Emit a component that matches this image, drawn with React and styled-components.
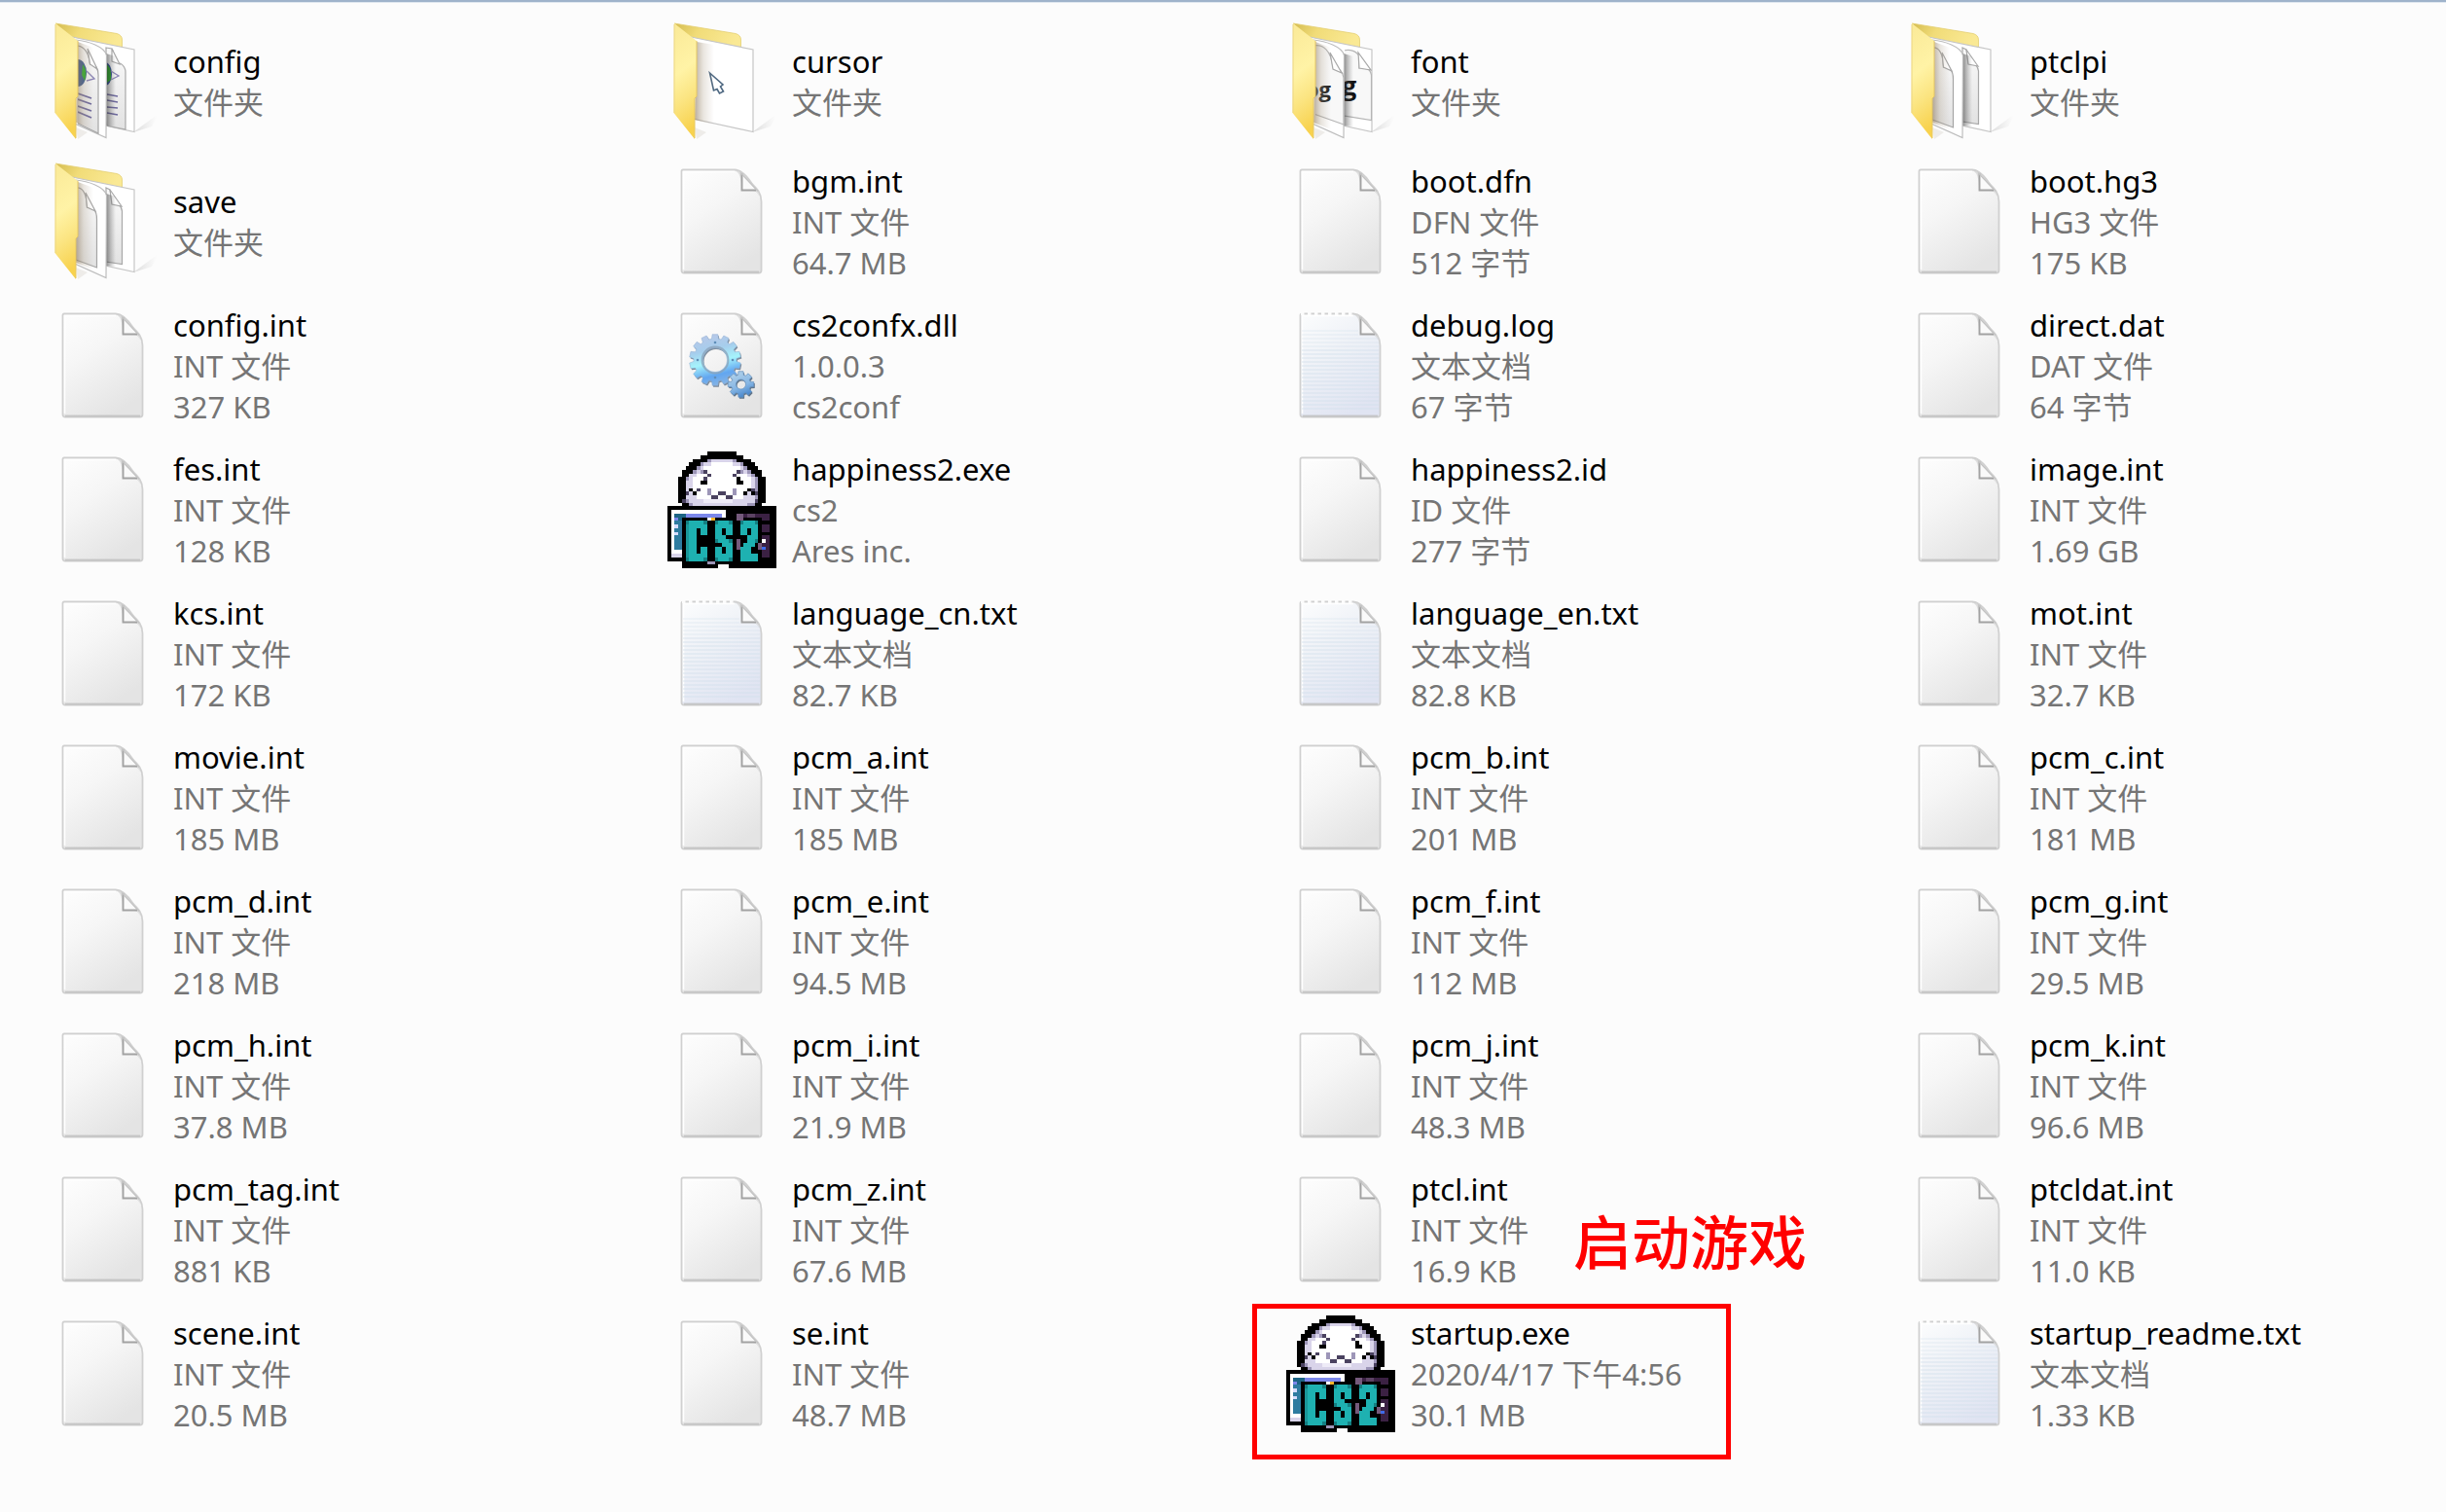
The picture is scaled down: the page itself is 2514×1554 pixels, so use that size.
import React from "react";
import styled, { createGlobalStyle } from "styled-components";

const Global = createGlobalStyle`
  * { box-sizing: border-box; }
  body {
    margin: 0;
    background: #fcfcfc;
    font-family: "Noto Sans", "Noto Sans CJK SC", sans-serif;
  }
`;

const Pane = styled.main`
  border-top: 2px solid #9fb3cb;
  box-shadow: inset 0 1px 0 #dfe7f0;
  padding: 12px 26px 54px 40px;
  min-height: 100vh;
`;

const FileGrid = styled.ul`
  list-style: none;
  margin: 0;
  padding: 0;
  display: grid;
  grid-template-columns: repeat(4, minmax(0, 1fr));
  column-gap: 96px;
`;

const Item = styled.li`
  position: relative;
  display: flex;
  align-items: center;
  gap: 10px;
  padding: 11px 0;
`;

const IconBox = styled.svg`
  flex: none;
  width: 128px;
  height: 118px;
  overflow: visible;
`;

const Lines = styled.div`
  display: flex;
  flex-direction: column;
  white-space: nowrap;
  font-size: 31px;
  line-height: 42px;
`;

const Name = styled.span`
  color: #000;
`;

const Detail = styled.span`
  color: #757575;
`;

const Frame = styled.div`
  position: absolute;
  left: -25px;
  top: 2px;
  width: 492px;
  height: 160px;
  border: 5px solid #f00;
  pointer-events: none;
`;

const Note = styled.strong`
  position: absolute;
  left: 305px;
  top: -94px;
  color: #f00;
  font-family: "Noto Sans CJK SC", sans-serif;
  font-size: 60px;
  font-weight: 500;
  line-height: 60px;
  white-space: nowrap;
`;

const SharedDefs = styled.svg`
  position: absolute;
  width: 0;
  height: 0;
`;

function Defs() {
  return (
    <SharedDefs aria-hidden="true">
      <defs>
        <linearGradient id="paper" x1="0.1" y1="0" x2="0.6" y2="1">
          <stop offset="0" stopColor="#fdfdfd" />
          <stop offset="0.4" stopColor="#f6f6f6" />
          <stop offset="1" stopColor="#e4e4e4" />
        </linearGradient>
        <linearGradient id="notepad" x1="0.1" y1="0" x2="0.6" y2="1">
          <stop offset="0" stopColor="#fbfcfd" />
          <stop offset="0.4" stopColor="#eff2f7" />
          <stop offset="1" stopColor="#e0e4f2" />
        </linearGradient>
        <linearGradient id="flap" x1="0" y1="0" x2="0.15" y2="1">
          <stop offset="0" stopColor="#fae997" />
          <stop offset="0.45" stopColor="#fff3a6" />
          <stop offset="0.72" stopColor="#fbe480" />
          <stop offset="1" stopColor="#f8d24e" />
        </linearGradient>
        <linearGradient id="folderBack" x1="0" y1="0" x2="1" y2="0.3">
          <stop offset="0" stopColor="#d3bb50" />
          <stop offset="0.4" stopColor="#f1dc78" />
          <stop offset="1" stopColor="#fae994" />
        </linearGradient>
        <linearGradient id="cast" x1="0" y1="0" x2="1" y2="0">
          <stop offset="0" stopColor="#8a7458" stopOpacity="0.6" />
          <stop offset="0.45" stopColor="#a8987f" stopOpacity="0.25" />
          <stop offset="1" stopColor="#b0a090" stopOpacity="0" />
        </linearGradient>
        <linearGradient id="pageCast" x1="0" y1="0" x2="1" y2="0">
          <stop offset="0" stopColor="#222" stopOpacity="0.6" />
          <stop offset="1" stopColor="#666" stopOpacity="0" />
        </linearGradient>
        <linearGradient id="innerDoc" x1="0" y1="0" x2="0" y2="1">
          <stop offset="0" stopColor="#fafafa" />
          <stop offset="1" stopColor="#e2e2e2" />
        </linearGradient>
        <linearGradient id="floor" x1="0" y1="0" x2="1" y2="0">
          <stop offset="0" stopColor="#777" stopOpacity="0.26" />
          <stop offset="0.9" stopColor="#999" stopOpacity="0" />
        </linearGradient>
        <linearGradient id="gearBlue" x1="0.3" y1="0" x2="0.55" y2="1">
          <stop offset="0" stopColor="#b9c8e8" />
          <stop offset="0.3" stopColor="#a6cdec" />
          <stop offset="0.55" stopColor="#a5f3fc" />
          <stop offset="0.8" stopColor="#62a6f0" />
          <stop offset="1" stopColor="#86b4e4" />
        </linearGradient>
        <linearGradient id="gearSmall" x1="0.2" y1="0" x2="0.6" y2="1">
          <stop offset="0" stopColor="#b5d3ea" />
          <stop offset="0.6" stopColor="#86b6e4" />
          <stop offset="1" stopColor="#4585cc" />
        </linearGradient>
        <clipPath id="backPage"><path d="M70 10H98V112H70Z" /></clipPath>
        <clipPath id="frontPage"><path d="M40 10H70V120H40Z" /></clipPath>
      </defs>
    </SharedDefs>
  );
}

const SHEET = "M26 5.5H79C87 5.5 93 14 97 20C101 24 106.5 29 106.5 38V109Q106.5 111.5 104 111.5H27Q24.5 111.5 24.5 109V7Q24.5 5.5 26 5.5Z";

function Sheet({ fill = "url(#paper)", children }) {
  return (
    <>
      <path d={SHEET} fill={fill} stroke="#d0d0d0" strokeWidth="1.8" />
      <path d="M27 110.5H104" stroke="#bdbdbd" strokeWidth="1.8" opacity="0.7" />
      <path d="M26.5 108V7.5H79" fill="none" stroke="#fff" strokeWidth="1.5" />
      {children}
      <path d="M79 6C84 8 86 13 86 27H97C102 27 105 32 106 37C104 28 99 23 95 18C90 12 86 7 79 6Z" fill="#d6d6d6" opacity="0.8" />
      <path d="M86.5 9.5V26.5H101Z" fill="#fafafa" />
      <path d="M86.5 9.5V26.5H101" fill="none" stroke="#a2a2a2" strokeWidth="1.9" />
      <path d="M85 8.5L103 27.5" stroke="#c4c4c4" strokeWidth="1.3" />
    </>
  );
}

function BlankIcon() {
  return <Sheet />;
}

function TextIcon() {
  const rules = Array.from({ length: 21 }, (_, i) => 23 + i * 4);
  return (
    <Sheet fill="url(#notepad)">
      {rules.map((y) => (
        <path
          key={y}
          d={`M26 ${y}H${y < 28 ? 84 : 105.5}`}
          stroke="#d2e0ec"
          strokeWidth="1.2"
          opacity={y < 40 ? 0.45 : 0.75}
        />
      ))}
      <path d="M25 5.5H80" stroke="#fcfcfc" strokeWidth="3" strokeDasharray="3.5 3.5" />
      <path d="M89 17H94M89 22H97" stroke="#b5b5b5" strokeWidth="1.5" />
    </Sheet>
  );
}

function gearPath(cx, cy, outer, inner, hole, teeth) {
  const pts = [];
  const step = (Math.PI * 2) / teeth;
  for (let i = 0; i < teeth; i += 1) {
    const a = i * step - Math.PI / 2;
    [[-0.36, inner], [-0.24, outer], [0.24, outer], [0.36, inner]].forEach(([k, r]) => {
      pts.push(`${(cx + Math.cos(a + k * step) * r).toFixed(2)} ${(cy + Math.sin(a + k * step) * r).toFixed(2)}`);
    });
  }
  return `M${pts.join("L")}ZM${cx + hole} ${cy}A${hole} ${hole} 0 1 0 ${cx - hole} ${cy}A${hole} ${hole} 0 1 0 ${cx + hole} ${cy}Z`;
}

function DllIcon() {
  const big = gearPath(59, 53, 26.5, 22, 12.5, 14);
  const small = gearPath(85.5, 78, 13.5, 10, 5, 8);
  return (
    <Sheet>
      <path d={big} transform="translate(1 1.5)" fill="#56697f" fillRule="evenodd" opacity="0.75" />
      <path d={big} fill="url(#gearBlue)" stroke="#8fadd0" strokeWidth="0.5" fillRule="evenodd" />
      <circle cx="59" cy="53" r="13.5" fill="none" stroke="#8ba3ba" strokeWidth="1.8" opacity="0.8" />
      {[[59, 35], [59, 71], [41, 53], [77, 53]].map(([x, y]) => (
        <circle key={`${x}-${y}`} cx={x} cy={y} r="1.3" fill="#5e8db8" />
      ))}
      <path d={small} transform="translate(1 1.5)" fill="#3f566f" fillRule="evenodd" opacity="0.8" />
      <path d={small} fill="url(#gearSmall)" stroke="#6590bd" strokeWidth="0.7" fillRule="evenodd" />
    </Sheet>
  );
}

function InnerDocs({ wide }) {
  return wide ? (
    <g stroke="#a8a8a8" strokeWidth="1.2" fill="url(#innerDoc)">
      <path d="M69 24L75 25C78 30 76 34 76 38C82 38 89 42 89 49V108L69 104Z" />
      <path d="M75 25V38L83 41Z" fill="#fff" />
    </g>
  ) : (
    <g stroke="#a8a8a8" strokeWidth="1.2" fill="url(#innerDoc)">
      <path d="M69 24L73 26C75 31 74 35 75 40C80 39 85 42 85.5 48V102.5L69 100Z" />
      <path d="M73 26L75 41L85 43Z" fill="#fff" />
    </g>
  );
}

function FolderIcon({ content }) {
  const stacked = content !== "cursor";
  return (
    <>
      <path d="M97 111L124 91L116 105Z" fill="url(#floor)" />
      <path d="M38 106L50 111L40 118Z" fill="#8a7a60" opacity="0.12" />
      <path d="M17 -1L80 9.5Q85.5 11 85.5 16V30L38 20Z" fill="url(#folderBack)" stroke="#e5cf73" strokeWidth="0.8" />
      <path d="M34 13L98 26V110.5L36 97Z" fill="#fff" stroke="#c6c6c6" strokeWidth="1.2" />
      {content === "cursor" && (
        <>
          <path d="M53.5 50L67 62L64.5 64L67.5 69L63.5 71L61 66.5L57.5 68Z" fill="#fff" stroke="#4d6780" strokeWidth="1.6" />
          <path d="M40 18L58 21V103L38 98Z" fill="url(#cast)" />
        </>
      )}
      {(content === "docs" || content === "web") && <InnerDocs wide={content === "web"} />}
      {content === "web" && (
        <g clipPath="url(#backPage)">
          <ellipse cx="68" cy="51" rx="7" ry="12" fill="#27448f" />
          <path d="M69 41C75 44 74 52 74 57L70 60Z" fill="#25a322" />
          <path d="M74 48L82 53L74 57" fill="none" stroke="#8a84b5" strokeWidth="1.3" />
          <path d="M70 72L81 74M70 78L81 80M70 85L81 86M70 91L81 93" stroke="#6c679c" strokeWidth="1.7" />
        </g>
      )}
      {content === "fonts" && (
        <g clipPath="url(#backPage)">
          <path d="M69 27C76 25 83 28 85 33C84 38 85 42 85 45C91 43 96 45 97.5 52V98.5L69 94Z" fill="#f8f8f8" stroke="#b5b5b5" strokeWidth="1.2" />
          <path d="M84 29L85 45L97 47Z" fill="#fff" stroke="#a8a8a8" strokeWidth="1.2" />
          <text x="67" y="73" fontFamily="Open Sans" fontSize="27" fontWeight="700" fill="#111">g</text>
        </g>
      )}
      {stacked && (
        <>
          <path d="M69 30L79 33V105L68 104Z" fill="url(#pageCast)" />
          <path d="M38 16C50 17 68 23 69.5 32L69 116.5L37 102Z" fill="#fff" stroke="#bdbdbd" strokeWidth="1.2" />
        </>
      )}
      {content === "docs" && (
        <g stroke="#a5a5a5" strokeWidth="1.2" fill="url(#innerDoc)">
          <path d="M38 24C45 23 49 30 49.5 44C56 43 59.5 48 59.5 56V106L38 98Z" />
          <path d="M48 29L49.5 44L58 48Z" fill="#fff" />
        </g>
      )}
      {content === "web" && (
        <g clipPath="url(#frontPage)">
          <path d="M38 22C46 22 51 28 52.5 41C58 40 61.5 46 61 54V112L38 101Z" fill="url(#innerDoc)" stroke="#a5a5a5" strokeWidth="1.2" />
          <path d="M50 25L52.5 41L60 46Z" fill="#fff" stroke="#a5a5a5" strokeWidth="1.2" />
          <ellipse cx="40" cy="50" rx="9" ry="14" fill="#35558f" />
          <path d="M45 41C49 46 49 52 47 58L44 52Z" fill="#2aa827" />
          <path d="M49 48L57 56L49 58" fill="none" stroke="#8a84b5" strokeWidth="1.3" />
          <path d="M40 71L54 76M40 77L54 82M40 84L54 89M40 90L54 96" stroke="#6c679c" strokeWidth="1.7" />
        </g>
      )}
      {content === "fonts" && (
        <g clipPath="url(#frontPage)">
          <path d="M38 22C48 20 56 27 58 44C64 44 68 48 69 55V103L38 92Z" fill="#f8f8f8" stroke="#b5b5b5" strokeWidth="1.2" />
          <path d="M55 29L58 46L67 50Z" fill="#fff" stroke="#a8a8a8" strokeWidth="1.2" />
          <text x="30" y="75" fontFamily="Open Sans" fontSize="22" fontWeight="700" fill="#222">og</text>
        </g>
      )}
      {stacked && <path d="M40 18L56 24V108L38 101Z" fill="url(#cast)" />}
      <path d="M17 -1L40 17V74L38 76V118L16.5 91Z" fill="url(#flap)" />
      <path d="M40 17V74L38 76V117" fill="none" stroke="#e6c865" strokeWidth="1" />
      <path d="M17 91V0" stroke="#ecd683" strokeWidth="1" />
    </>
  );
}

const K = "#000", W = "#fff", LAV = "#d9d4ea", GREY = "#9d96b8", DARK = "#4a4260";
const TEAL = "#1eb1b1", DEEP = "#147f82", PLUM = "#3b2143", MAUVE = "#755a7c";
const BLUE = "#7b87ea", SEA = "#1d6585";

// Each entry: column, row, width, height, colour on a 30 x 32 grid.
const CS2_PIXELS = [
  [11, 0, 8, 1, K], [9, 1, 12, 1, K], [7, 2, 16, 1, K], [6, 3, 18, 1, K], [5, 4, 20, 1, K],
  [4, 5, 22, 2, K], [3, 7, 24, 7, K], [4, 14, 22, 1, K],
  [11, 2, 8, 1, LAV], [9, 3, 12, 1, LAV], [8, 4, 14, 1, LAV], [7, 5, 16, 1, LAV],
  [6, 6, 18, 1, LAV], [5, 7, 20, 7, LAV], [6, 14, 18, 1, LAV],
  [12, 3, 6, 1, W], [10, 4, 10, 1, W], [9, 5, 12, 1, W], [8, 6, 14, 1, W], [7, 7, 16, 4, W],
  [7, 11, 15, 1, W], [8, 12, 13, 1, W], [10, 13, 8, 1, "#eeebf7"],
  [11, 2, 1, 1, GREY], [18, 2, 1, 1, GREY], [9, 3, 1, 1, GREY], [20, 3, 1, 1, GREY],
  [8, 4, 1, 1, GREY], [21, 4, 1, 1, GREY], [7, 5, 1, 1, GREY], [22, 5, 1, 1, GREY],
  [5, 7, 1, 1, GREY], [24, 7, 1, 6, GREY], [5, 13, 1, 1, GREY], [24, 13, 1, 1, DARK],
  [6, 14, 1, 1, GREY], [22, 14, 2, 1, GREY], [4, 13, 1, 1, DARK], [23, 6, 1, 1, GREY],
  [9, 5, 1, 1, GREY], [10, 5, 1, 1, DARK], [11, 6, 1, 1, DARK], [10, 7, 1, 1, DARK], [9, 8, 2, 1, K],
  [20, 5, 1, 1, GREY], [19, 5, 1, 1, DARK], [18, 6, 1, 1, DARK], [19, 7, 1, 1, K], [19, 8, 2, 1, K],
  [5, 11, 1, 1, DARK], [6, 10, 1, 1, K], [7, 11, 1, 1, K], [8, 10, 1, 1, DARK],
  [24, 11, 1, 1, DARK], [23, 10, 1, 1, DARK], [22, 10, 1, 1, K], [21, 11, 1, 1, K], [23, 11, 1, 1, K],
  [11, 10, 1, 2, GREY], [18, 10, 1, 2, GREY], [12, 12, 2, 1, DARK], [14, 11, 2, 1, DARK], [16, 12, 2, 1, DARK],
  [0, 15, 30, 15, K], [4, 30, 26, 2, K], [14, 31, 3, 1, "#fcfcfc"],
  [1, 16, 15, 1, W], [1, 17, 1, 12, W], [15, 17, 1, 1, W],
  [2, 17, 3, 1, SEA], [5, 17, 10, 1, BLUE], [2, 18, 2, 9, "#2e7ca0"], [2, 18, 1, 1, BLUE],
  [2, 20, 1, 1, "#d5dcff"], [2, 22, 1, 1, "#d5dcff"], [2, 27, 2, 1, W], [1, 28, 3, 1, LAV], [3, 18, 1, 1, SEA],
  [11, 18, 1, 1, W], [12, 18, 1, 1, "#f3b62b"],
  [19, 17, 7, 1, PLUM], [19, 17, 2, 2, MAUVE], [22, 17, 2, 1, "#5c4263"], [26, 17, 2, 2, PLUM],
  [26, 20, 2, 2, PLUM], [26, 23, 2, 6, PLUM], [19, 24, 1, 3, MAUVE], [25, 25, 1, 2, MAUVE],
  [26, 24, 1, 1, W], [26, 26, 1, 1, "#3f6be8"], [11, 30, 2, 1, GREY],
  [5, 19, 6, 11, TEAL], [8, 21, 1, 7, K], [9, 23, 2, 3, K], [5, 19, 1, 1, DEEP], [10, 19, 1, 1, DEEP],
  [5, 29, 1, 1, DEEP], [10, 29, 1, 1, DEEP], [5, 20, 1, 9, "#1a9799"],
  [13, 19, 5, 11, TEAL], [15, 21, 1, 2, K], [16, 23, 2, 1, K], [17, 24, 1, 1, DEEP], [13, 25, 2, 1, K],
  [13, 24, 1, 1, DEEP], [15, 26, 1, 2, K], [13, 19, 1, 1, DEEP], [17, 19, 1, 1, DEEP],
  [13, 29, 1, 1, DEEP], [17, 29, 1, 1, DEEP],
  [20, 19, 5, 11, TEAL], [22, 21, 1, 2, K], [20, 23, 2, 2, K], [20, 25, 1, 1, K], [24, 25, 1, 1, K],
  [23, 26, 2, 1, K], [23, 27, 2, 1, K], [20, 19, 1, 1, DEEP], [24, 19, 1, 1, DEEP], [24, 24, 1, 1, DEEP],
];

function Cs2Icon() {
  return (
    <svg x="10" y="-1" width="112" height="120" viewBox="0 0 30 32" preserveAspectRatio="none" shapeRendering="crispEdges">
      {CS2_PIXELS.map(([x, y, w, h, fill], i) => (
        <rect key={i} x={x} y={y} width={w} height={h} fill={fill} />
      ))}
    </svg>
  );
}

const ICONS = { blank: BlankIcon, text: TextIcon, dll: DllIcon, cs2: Cs2Icon, folder: FolderIcon };

const folder = (name, content) => ({ name, details: ["文件夹"], icon: "folder", content });
const int = (name, size) => ({ name: `${name}.int`, details: ["INT 文件", size], icon: "blank" });
const file = (name, type, size, icon = "blank") => ({ name, details: [type, size], icon });

const FILES = [
  folder("config", "web"), folder("cursor", "cursor"), folder("font", "fonts"), folder("ptclpi", "docs"),
  folder("save", "docs"), int("bgm", "64.7 MB"), file("boot.dfn", "DFN 文件", "512 字节"), file("boot.hg3", "HG3 文件", "175 KB"),
  int("config", "327 KB"), file("cs2confx.dll", "1.0.0.3", "cs2conf", "dll"), file("debug.log", "文本文档", "67 字节", "text"), file("direct.dat", "DAT 文件", "64 字节"),
  int("fes", "128 KB"), file("happiness2.exe", "cs2", "Ares inc.", "cs2"), file("happiness2.id", "ID 文件", "277 字节"), int("image", "1.69 GB"),
  int("kcs", "172 KB"), file("language_cn.txt", "文本文档", "82.7 KB", "text"), file("language_en.txt", "文本文档", "82.8 KB", "text"), int("mot", "32.7 KB"),
  int("movie", "185 MB"), int("pcm_a", "185 MB"), int("pcm_b", "201 MB"), int("pcm_c", "181 MB"),
  int("pcm_d", "218 MB"), int("pcm_e", "94.5 MB"), int("pcm_f", "112 MB"), int("pcm_g", "29.5 MB"),
  int("pcm_h", "37.8 MB"), int("pcm_i", "21.9 MB"), int("pcm_j", "48.3 MB"), int("pcm_k", "96.6 MB"),
  int("pcm_tag", "881 KB"), int("pcm_z", "67.6 MB"), int("ptcl", "16.9 KB"), int("ptcldat", "11.0 KB"),
  int("scene", "20.5 MB"), int("se", "48.7 MB"),
  { ...file("startup.exe", "2020/4/17 下午4:56", "30.1 MB", "cs2"), note: "启动游戏" },
  file("startup_readme.txt", "文本文档", "1.33 KB", "text"),
];

function FileItem({ name, details, icon, content, note }) {
  const Icon = ICONS[icon];
  return (
    <Item>
      <IconBox viewBox="0 0 128 118" aria-hidden="true">
        <Icon content={content} />
      </IconBox>
      <Lines>
        <Name>{name}</Name>
        {details.map((line) => (
          <Detail key={line}>{line}</Detail>
        ))}
      </Lines>
      {note && (
        <>
          <Frame />
          <Note>{note}</Note>
        </>
      )}
    </Item>
  );
}

export default function App() {
  return (
    <>
      <Global />
      <Defs />
      <Pane>
        <FileGrid>
          {FILES.map((entry) => (
            <FileItem key={entry.name} {...entry} />
          ))}
        </FileGrid>
      </Pane>
    </>
  );
}
